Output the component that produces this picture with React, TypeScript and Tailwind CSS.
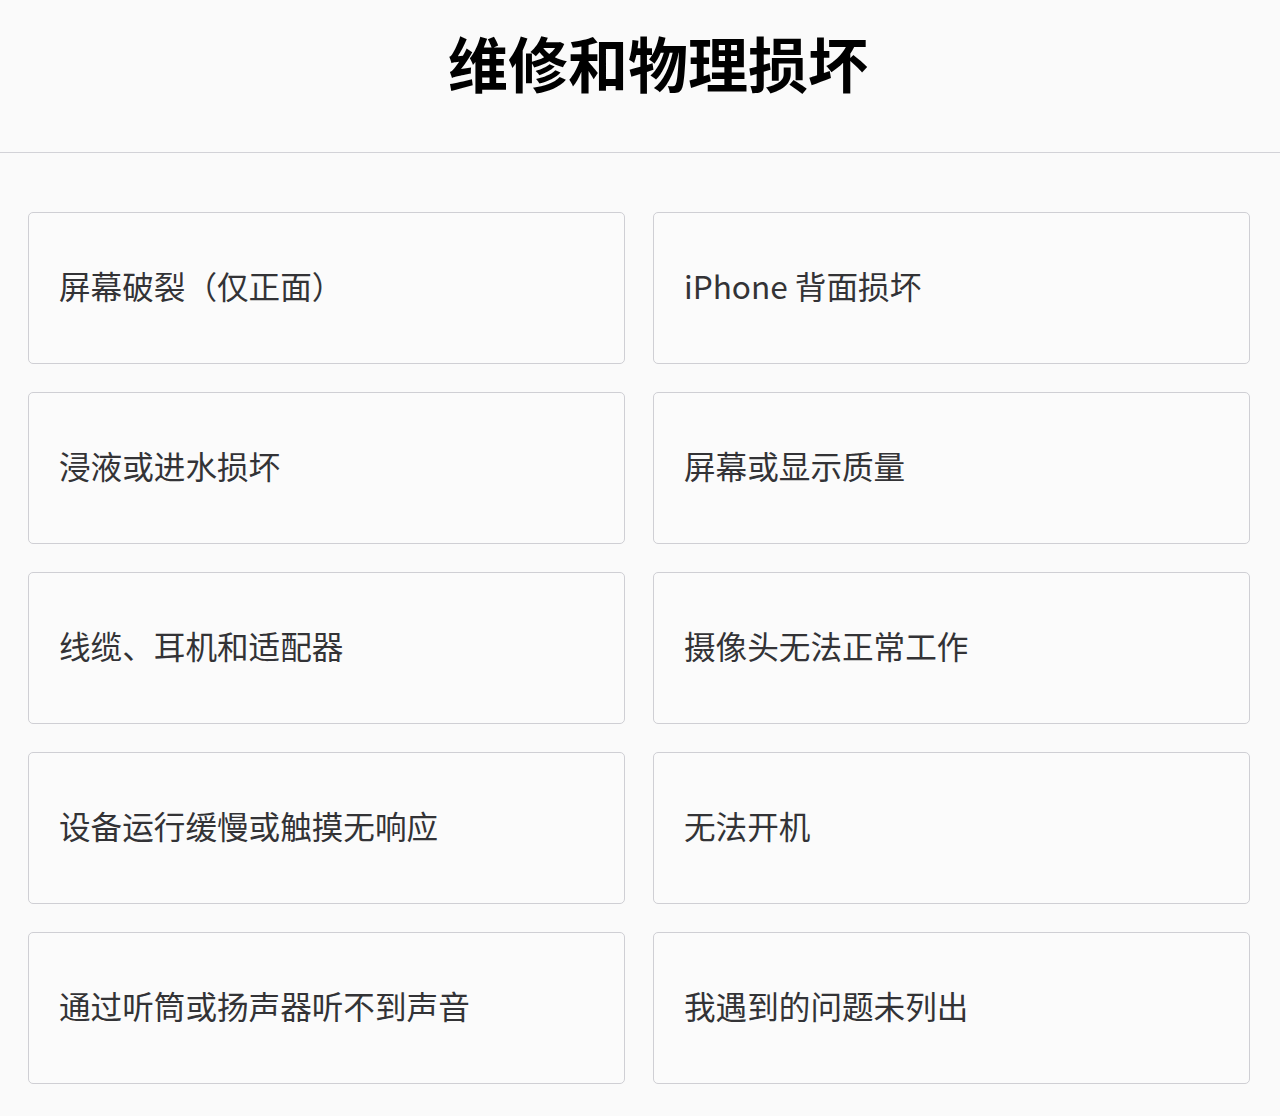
import React from 'react';

const items: string[] = [
  '屏幕破裂（仅正面）',
  'iPhone 背面损坏',
  '浸液或进水损坏',
  '屏幕或显示质量',
  '线缆、耳机和适配器',
  '摄像头无法正常工作',
  '设备运行缓慢或触摸无响应',
  '无法开机',
  '通过听筒或扬声器听不到声音',
  '我遇到的问题未列出',
];

const App: React.FC = () => {
  return (
    <div
      className="min-h-[1116px] w-full bg-[#fafafa] text-[#1d1d1f]"
      style={{ fontFamily: '"Noto Sans CJK SC", "Noto Sans", sans-serif' }}
    >
      {/* Header */}
      <header className="h-[153px] border-b border-[#d2d2d7] flex justify-center pt-[25px]">
        <h1 className="text-[60px] leading-[74px] font-bold text-black pl-[36px]">维修和物理损坏</h1>
      </header>

      {/* Options grid */}
      <main className="pt-[59px] pl-[28px] pr-[30px] pb-[32px]">
        <div className="grid grid-cols-2 gap-x-[28px] gap-y-[28px]">
          {items.map((label) => (
            <button
              key={label}
              className="h-[152px] rounded-[5px] border border-[#cfcfd4] bg-[#fbfbfb] flex items-center pl-[30px] pb-[4px] text-left"
            >
              <span className="text-[31.6px] leading-none text-[#333336]">{label}</span>
            </button>
          ))}
        </div>
      </main>
    </div>
  );
};

export default App;
